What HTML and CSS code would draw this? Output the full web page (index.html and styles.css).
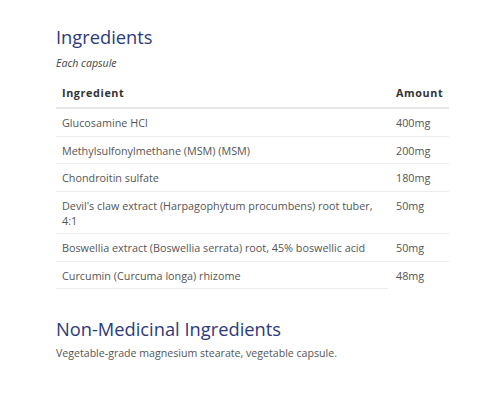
FILE: index.html
```html
<!DOCTYPE html>
<html>
<head>
<meta charset="utf-8">
<link rel="stylesheet" href="styles.css">
</head>
<body>
<main class="page">
  <section class="block">
    <h2 class="title">Ingredients</h2>
    <p class="sub">Each capsule</p>
    <table class="tbl">
      <thead>
        <tr><th class="c1">Ingredient</th><th class="c2">Amount</th></tr>
      </thead>
      <tbody>
        <tr><td>Glucosamine HCl</td><td>400mg</td></tr>
        <tr><td>Methylsulfonylmethane (MSM) (MSM)</td><td>200mg</td></tr>
        <tr><td>Chondroitin sulfate</td><td>180mg</td></tr>
        <tr><td>Devil's claw extract (Harpagophytum procumbens) root tuber, 4:1</td><td>50mg</td></tr>
        <tr><td>Boswellia extract (Boswellia serrata) root, 45% boswellic acid</td><td>50mg</td></tr>
        <tr class="last"><td>Curcumin (Curcuma longa) rhizome</td><td class="noline">48mg</td></tr>
      </tbody>
    </table>
  </section>
  <section class="block2">
    <h2 class="title">Non-Medicinal Ingredients</h2>
    <p class="text">Vegetable-grade magnesium stearate, vegetable capsule.</p>
  </section>
</main>
</body>
</html>
```

FILE: styles.css
```css
html, body {
  margin: 0;
  padding: 0;
  background: #fff;
}
body {
  font-family: "Open Sans", "Liberation Sans", sans-serif;
  color: #555;
}
.page {
  padding: 23px 51px 0 56px;
}
.title {
  margin: 0;
  font-weight: 400;
  font-size: 18.3px;
  line-height: 28px;
  color: #2e3a7a;
}
.sub {
  margin: 5px 0 0;
  font-style: italic;
  font-size: 10.6px;
  line-height: 15px;
  color: #444;
}
.tbl {
  margin-top: 6px;
  width: 100%;
  border-collapse: collapse;
  table-layout: fixed;
  font-size: 10.8px;
  line-height: 15px;
}
.tbl th {
  text-align: left;
  font-weight: 700;
  font-size: 10.8px;
  letter-spacing: 0.6px;
  color: #333;
  padding: 8px 6px 7px;
  border-bottom: 2px solid #e9e9e9;
}
.tbl th.c1 {
  width: 318px;
  padding-right: 8px;
}
.tbl th.c2 {
  padding-left: 8px;
}
.tbl td {
  padding: 6px 8px 5.5px 6px;
  border-bottom: 1px solid #ececec;
  vertical-align: top;
}
.tbl td + td {
  padding-left: 8px;
}
.tbl td.noline {
  border-bottom-color: transparent;
}
.block2 {
  margin-top: 26px;
}
.text {
  margin: 3px 0 0;
  font-size: 10.6px;
  line-height: 15px;
}
```
